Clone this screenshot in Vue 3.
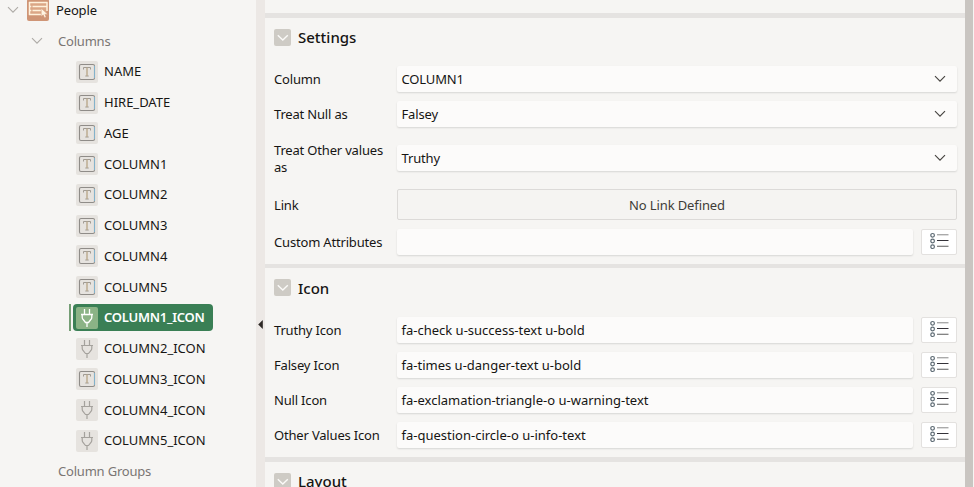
<script setup>
const nodes = [
  { label: 'NAME', icon: 'text' },
  { label: 'HIRE_DATE', icon: 'text' },
  { label: 'AGE', icon: 'text' },
  { label: 'COLUMN1', icon: 'text' },
  { label: 'COLUMN2', icon: 'text' },
  { label: 'COLUMN3', icon: 'text' },
  { label: 'COLUMN4', icon: 'text' },
  { label: 'COLUMN5', icon: 'text' },
  { label: 'COLUMN1_ICON', icon: 'plug', selected: true },
  { label: 'COLUMN2_ICON', icon: 'plug' },
  { label: 'COLUMN3_ICON', icon: 'text' },
  { label: 'COLUMN4_ICON', icon: 'plug' },
  { label: 'COLUMN5_ICON', icon: 'plug' },
]

const groups = [
  {
    title: 'Settings',
    name: 'settings',
    fields: [
      { label: 'Column', type: 'select', value: 'COLUMN1' },
      { label: 'Treat Null as', type: 'select', value: 'Falsey' },
      { label: 'Treat Other values as', type: 'select', value: 'Truthy', tall: true },
      { label: 'Link', type: 'link', value: 'No Link Defined' },
      { label: 'Custom Attributes', type: 'text', value: '' },
    ],
  },
  {
    title: 'Icon',
    name: 'icon',
    fields: [
      { label: 'Truthy Icon', type: 'text', value: 'fa-check u-success-text u-bold' },
      { label: 'Falsey Icon', type: 'text', value: 'fa-times u-danger-text u-bold' },
      { label: 'Null Icon', type: 'text', value: 'fa-exclamation-triangle-o u-warning-text' },
      { label: 'Other Values Icon', type: 'text', value: 'fa-question-circle-o u-info-text' },
    ],
  },
  { title: 'Layout', name: 'layout', fields: [] },
]
</script>

<template>
  <div class="designer">
    <nav class="tree">
      <div class="row root">
        <svg class="arrow" width="12" height="8" viewBox="0 0 12 8"><path d="M1 1.2 6 6.2 11 1.2" /></svg>
        <svg class="region" width="22" height="22" viewBox="0 0 22 22">
          <rect width="22" height="22" rx="2" fill="#cf9576" />
          <path d="M2.5 3h17v13h-17z" fill="#dba686" />
          <path d="M2 3.5h18.5M5.5 7.5h14M5.5 11.5h9M2 15.5h12M2.5 3v13M20 3v9" fill="none" stroke="#fff1dc" stroke-width="1.5" />
          <path d="M2.5 7.5h1.8M2.5 11.5h1.8" stroke="#fff1dc" stroke-width="1.5" />
          <path d="M14.2 9.3v8.3l2-1.8 1.3 3 1.7-.8-1.3-2.8h2.8z" fill="#fff4e2" stroke="#cf9576" stroke-width=".5" />
        </svg>
        <span>People</span>
      </div>
      <div class="row branch">
        <svg class="arrow" width="12" height="8" viewBox="0 0 12 8"><path d="M1 1.2 6 6.2 11 1.2" /></svg>
        <span>Columns</span>
      </div>
      <div v-for="n in nodes" :key="n.label" class="row leaf" :class="{ selected: n.selected }">
        <div class="node">
          <svg class="badge" width="22" height="22" viewBox="0 0 22 22">
            <rect class="tile" width="22" height="22" rx="2" />
            <g v-if="n.icon === 'text'" fill="none">
              <rect x="3.5" y="3.5" width="15" height="15" rx="1.5" stroke="#8f8c88" stroke-width="1.1" />
              <path d="M18.5 5v12" stroke="#83b2cb" />
              <path d="M7.5 8.5v-2h7v2M9.3 15h3.4" stroke="#a09b93" />
              <path d="M11 6.5v8.5" stroke="#b9a88c" stroke-width="1.4" />
            </g>
            <path v-else class="plug" d="M8.5 2v5M13.5 2v5M5 7.5h12M6.2 7.5v2.7q0 1.5 1.2 2.6L9.5 15.5h3l2.1-2.7q1.2-1.1 1.2-2.6V7.5M11 15.5V20" />
          </svg>
          <span>{{ n.label }}</span>
        </div>
      </div>
      <div class="row groups"><span>Column Groups</span></div>
    </nav>

    <div class="splitter">
      <svg width="5" height="9" viewBox="0 0 5 9"><path d="M4.8 0v9L.2 4.5z" fill="#2d2926" /></svg>
    </div>

    <main class="panel">
      <section v-for="g in groups" :key="g.name" class="group" :class="g.name">
        <header class="head">
          <svg width="17" height="17" viewBox="0 0 17 17">
            <rect width="17" height="17" rx="2" fill="#cecbc5" />
            <path d="M3.8 6.2 8.8 11l5-4.8" fill="none" stroke="#fbfaf8" stroke-width="1.4" />
          </svg>
          <h2>{{ g.title }}</h2>
        </header>
        <div v-for="f in g.fields" :key="f.label" class="field" :class="[f.type, { tall: f.tall }]">
          <label>{{ f.label }}</label>
          <div class="control">
            <span>{{ f.value }}</span>
            <svg v-if="f.type === 'select'" width="12" height="8" viewBox="0 0 12 8"><path d="M1 1.2 6 6.2 11 1.2" fill="none" stroke="#484542" stroke-width="1.15" /></svg>
          </div>
          <button v-if="f.type === 'text'" class="lov">
            <svg width="20" height="18" viewBox="0 0 20 18" fill="none">
              <g stroke="#5d6a73" stroke-width="1.2">
                <circle cx="3.6" cy="3.3" r="1.8" /><circle cx="3.6" cy="9" r="1.8" /><circle cx="3.6" cy="14.7" r="1.8" />
              </g>
              <path d="M8 2.7h11.5" stroke="#aaa" stroke-width="1.4" />
              <path d="M8 8.5h11.5" stroke="#353239" />
              <path d="M8 14.3h11.5" stroke="#777" stroke-width="1.2" />
            </svg>
          </button>
        </div>
      </section>
    </main>
    <div class="scrollbar"></div>
  </div>
</template>

<style>
body { overflow: hidden; }
</style>

<style scoped>
.designer {
  display: flex;
  width: 974px;
  height: 487px;
  overflow: hidden;
  background: #f6f5f3;
  color: #161513;
  font: 13px/17px "Noto Sans", sans-serif;
}
.tree { width: 256px; flex: none; margin-top: -5px; }
.row { display: flex; align-items: center; height: 30.75px; }
.root { padding-left: 7px; letter-spacing: -.15px; }
.root span { margin-left: 7px; }
.arrow { fill: none; stroke: #aeaaa6; stroke-width: 1.1; }
.region { margin-left: 8px; }
.branch { padding-left: 31px; color: #7a7673; letter-spacing: -.2px; }
.branch span { margin-left: 15px; }
.groups { padding-left: 58px; color: #7a7673; letter-spacing: -.2px; }
.leaf { padding-left: 69px; }
.node {
  display: flex;
  align-items: center;
  gap: 6px;
  height: 27px;
  margin-left: 4px;
  padding: 0 8px 0 3px;
  border-radius: 4px;
}
.tile { fill: #e6e3df; }
.plug { fill: none; stroke: #a5a29d; stroke-width: 1.2; }
.selected::before { content: ""; width: 2px; height: 27px; background: #759e75; }
.selected .node { margin-left: 2px; background: #3a7f55; color: #fff; font-weight: 600; letter-spacing: -.25px; }
.selected .tile { fill: #8bb386; }
.selected .plug { stroke: #fff; stroke-width: 1.3; }
.splitter {
  display: flex;
  align-items: center;
  justify-content: flex-end;
  width: 9px;
  flex: none;
  padding: 162px 2px 0 0;
  box-sizing: border-box;
  background: #ece8e5;
}
.panel { width: 700px; flex: none; padding-top: 13px; box-sizing: border-box; }
.group { box-sizing: border-box; border-top: 5px solid #e5e3e1; padding: 11px 8px 0 9px; }
.settings { height: 251px; }
.icon { height: 193px; border-top-width: 4px; }
.head { display: flex; align-items: center; gap: 7px; height: 17px; margin-bottom: 20px; }
.icon .head { margin-bottom: 21px; }
h2 { margin: 0; padding-bottom: 2px; font-size: 15px; line-height: 20px; font-weight: 500; }
.icon h2 { padding-bottom: 0; }
.field { display: flex; align-items: center; height: 26px; margin-bottom: 9px; }
.field.tall { height: 44px; }
.field.link { height: 31px; }
label { width: 123px; flex: none; padding-right: 8px; box-sizing: border-box; letter-spacing: -.18px; }
.tall label, .link label { padding-top: 2px; }
.control {
  display: flex;
  align-items: center;
  justify-content: space-between;
  flex: 1;
  height: 26px;
  padding: 0 11px 0 4.5px;
  box-sizing: border-box;
  border-radius: 2px;
  background: #fcfbfa;
  box-shadow: 0 1px 2px rgba(0, 0, 0, .13);
}
.select .control { letter-spacing: -.15px; }
.link .control {
  justify-content: center;
  height: 31px;
  padding: 2px 0 0;
  border: 1px solid #dcdad8;
  background: #f5f4f2;
  box-shadow: none;
  color: #403c38;
  letter-spacing: -.12px;
}
.lov {
  display: flex;
  align-items: center;
  justify-content: center;
  width: 36px;
  height: 26px;
  margin: 0 0 0 8px;
  padding: 0 0 2px;
  border: 1px solid #e3e1df;
  border-radius: 2px;
  background: #fff;
}
.scrollbar { width: 8px; background: #c9c5c1; }
</style>
